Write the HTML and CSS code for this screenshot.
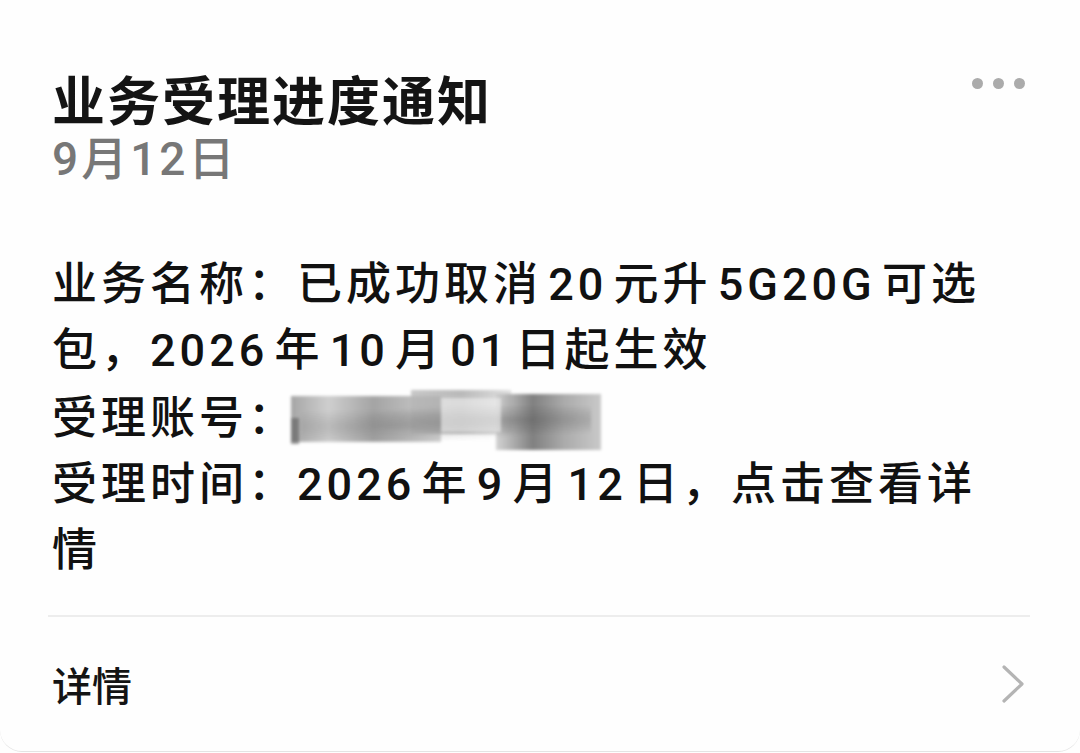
FILE: index.html
```html
<!DOCTYPE html>
<html lang="zh-CN">
<head>
<meta charset="utf-8">
<title>业务受理进度通知</title>
<link rel="stylesheet" href="styles.css">
</head>
<body>
<div class="card">
  <div class="head">
    <div class="titles">
      <h1 class="title">业务受理进度通知</h1>
      <div class="date">9月12日</div>
    </div>
    <div class="more" aria-label="更多"><i></i><i></i><i></i></div>
  </div>
  <div class="body">
    <p class="line">业务名称：已成功取消 20 元升 5G20G 可选包，2026 年 10 月 01 日起生效</p>
    <p class="line">受理账号：<span class="smudge"><b class="s1"></b><b class="s2"></b><b class="s3"></b><b class="s4"></b><b class="s5"></b><b class="s6"></b></span></p>
    <p class="line">受理时间：2026 年 9 月 12 日，点击查看详情</p>
  </div>
  <div class="divider"></div>
  <div class="footer">
    <span class="detail">详情</span>
    <svg class="chev" width="26" height="40" viewBox="0 0 26 40"><path d="M4 3 L22 20 L4 37" fill="none" stroke="#b4b4b4" stroke-width="3.2" stroke-linecap="round" stroke-linejoin="round"/></svg>
  </div>
</div>
</body>
</html>
```

FILE: styles.css
```css
* { box-sizing: border-box; }
html, body {
  margin: 0;
  padding: 0;
  background: #fefefe;
}
body {
  width: 1080px;
  height: 753px;
  overflow: hidden;
  font-family: "Roboto", "Noto Sans CJK SC", sans-serif;
  color: #111;
}
.card {
  height: 752px;
  border-bottom: 1px solid #e4e4e4;
  border-radius: 0 0 22px 22px;
  background: #fefefe;
  display: flex;
  flex-direction: column;
}
.head {
  display: flex;
  justify-content: space-between;
  align-items: flex-start;
  padding: 66px 55px 0 52px;
}
.title {
  margin: 0;
  font-family: "Noto Sans CJK SC", sans-serif;
  font-size: 53px;
  line-height: 64px;
  font-weight: 600;
  letter-spacing: 2px;
  color: #141414;
}
.date {
  font-size: 46px;
  line-height: 58px;
  font-weight: 500;
  letter-spacing: 3px;
  color: #777;
}
.more {
  display: flex;
  gap: 10px;
  margin-top: 12px;
}
.more i {
  display: block;
  width: 11px;
  height: 11px;
  border-radius: 50%;
  background: #ababab;
}
.body {
  padding: 64px 78px 0 52px;
}
.line {
  margin: 0;
  font-size: 45px;
  line-height: 66px;
  font-weight: 500;
  letter-spacing: 4px;
  word-spacing: -9px;
  color: #111;
}
.smudge {
  display: inline-block;
  position: relative;
  width: 312px;
  height: 68px;
  vertical-align: -18px;
  margin-left: -6px;
  filter: blur(1.8px);
}
.smudge b {
  position: absolute;
  display: block;
}
.s1 {
  left: 0; top: 12px; width: 150px; height: 46px;
  background: linear-gradient(90deg, #8f8f8f 0%, #c2c2c2 25%, #8d8d8d 55%, #c4c4c4 100%);
  opacity: 0.8;
}
.s2 {
  left: 120px; top: 6px; width: 100px; height: 44px;
  background: linear-gradient(90deg, #b5b5b5, #a2a2a2 50%, #d6d6d6);
  opacity: 0.75;
}
.s3 {
  left: 205px; top: 10px; width: 105px; height: 56px;
  background: linear-gradient(90deg, #cccccc 0%, #6a6a6a 35%, #9c9c9c 65%, #c0c0c0 100%);
  opacity: 0.85;
}
.s4 {
  left: 10px; top: 22px; width: 290px; height: 34px;
  background: radial-gradient(ellipse at 30% 60%, rgba(90,90,90,0.25), transparent 60%),
              radial-gradient(ellipse at 75% 40%, rgba(70,70,70,0.3), transparent 55%);
}
.s5 {
  left: 0; top: 34px; width: 8px; height: 26px;
  background: #5c5c5c;
  opacity: 0.6;
}
.s6 {
  left: 150px; top: 14px; width: 60px; height: 34px;
  background: rgba(240,240,240,0.6);
}
.divider {
  margin: 31px 50px 0 48px;
  height: 2px;
  background: #ededed;
}
.footer {
  flex: 1;
  display: flex;
  align-items: center;
  justify-content: space-between;
  padding: 0 54px 0 52px;
}
.detail {
  font-family: "Noto Sans CJK SC", sans-serif;
  font-size: 40px;
  font-weight: 500;
  color: #141414;
  line-height: 50px;
}
.chev {
  display: block;
}
```
